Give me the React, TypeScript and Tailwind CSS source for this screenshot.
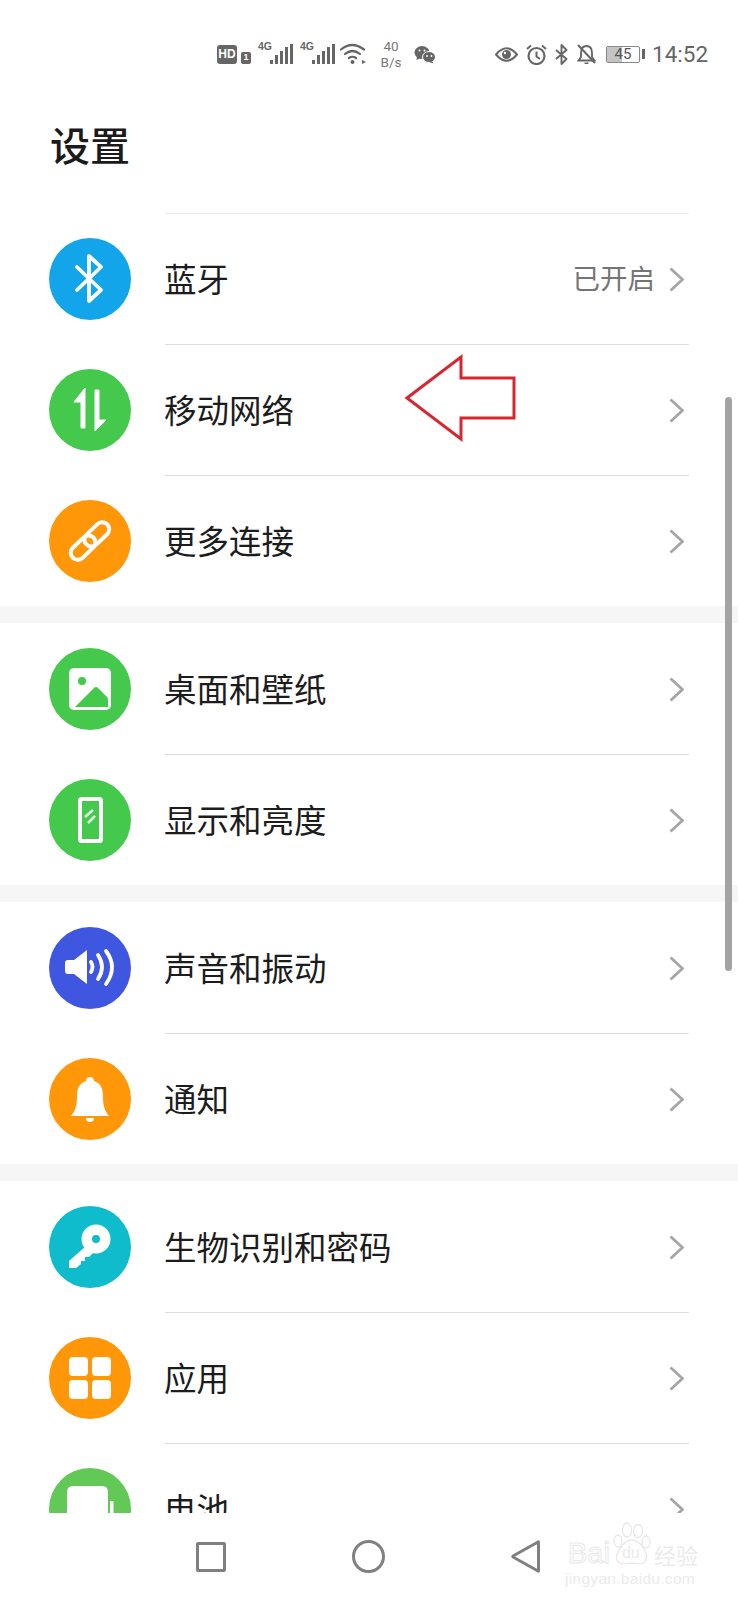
import type { ReactNode } from "react";

const FONT = "font-['Noto_Sans_CJK_SC','Noto_Sans',sans-serif]";

type Row = { label: string; color: string; icon: ReactNode; value?: string };

function BluetoothGlyph() {
  return (
    <path
      d="M28 29 L52 52 L40 63 V18 L52 29 L28 52"
      fill="none"
      stroke="#fff"
      strokeWidth="3.8"
      strokeLinecap="round"
      strokeLinejoin="round"
    />
  );
}

function Chevron() {
  return (
    <svg width="15" height="25" viewBox="0 0 15 25" className="shrink-0">
      <path d="M1.5 1.5 L13.5 12.5 L1.5 23.5" fill="none" stroke="#a6a6a6" strokeWidth="2.8" />
    </svg>
  );
}

const groups: Row[][] = [
  [
    { label: "蓝牙", color: "#12a5ea", value: "已开启", icon: <BluetoothGlyph /> },
    {
      label: "移动网络",
      color: "#45c94c",
      icon: (
        <g fill="#fff" stroke="#fff" strokeWidth="1" strokeLinejoin="round">
          <polygon points="36,19 36,59 32,59 32,33 25,33" />
          <polygon points="46,21 50,21 50,51 57,51 46,62" />
        </g>
      ),
    },
    {
      label: "更多连接",
      color: "#ff9708",
      icon: (
        <g transform="rotate(-44 41 41)" fill="none" stroke="#fff" strokeWidth="4">
          <rect x="17" y="34" width="29" height="14" rx="7" />
          <rect x="36" y="34" width="29" height="14" rx="7" />
        </g>
      ),
    },
  ],
  [
    {
      label: "桌面和壁纸",
      color: "#45c94c",
      icon: (
        <g>
          <rect x="20" y="20" width="42" height="42" rx="5" fill="#fff" />
          <circle cx="33" cy="33" r="4" fill="#45c94c" />
          <path d="M26 59 L45 40 Q47 38 49 40 L58 49 Q59 50 59 52 V59 Z" fill="#45c94c" />
        </g>
      ),
    },
    {
      label: "显示和亮度",
      color: "#45c94c",
      icon: (
        <g fill="none" stroke="#fff">
          <rect x="31" y="20" width="21" height="42" rx="1.5" strokeWidth="4" />
          <path d="M36 38 L44 31 M39 44 L46 37" strokeWidth="2.5" strokeOpacity="0.85" />
        </g>
      ),
    },
  ],
  [
    {
      label: "声音和振动",
      color: "#3f57e0",
      icon: (
        <g>
          <path d="M16 36 Q16 33 19 33 H25 L38 23 V57 L25 47 H19 Q16 47 16 44 Z" fill="#fff" />
          <path
            d="M42 35 Q45 40 42 45 M49 28 Q57 40 49 52 M57 24 Q69 40 57 57"
            fill="none"
            stroke="#fff"
            strokeWidth="3.8"
            strokeLinecap="round"
          />
        </g>
      ),
    },
    {
      label: "通知",
      color: "#ff9708",
      icon: (
        <g fill="#fff">
          <path d="M41 19 C44 19 45 21 45 23 C52 25 54 31 54 38 C54 46 55 52 60 58 H22 C27 52 28 46 28 38 C28 31 30 25 37 23 C37 21 38 19 41 19 Z" />
          <path d="M37 60 H45 Q45 64 41 64 Q37 64 37 60 Z" />
        </g>
      ),
    },
  ],
  [
    {
      label: "生物识别和密码",
      color: "#0fbccb",
      icon: (
        <g>
          <circle cx="47" cy="33" r="14.5" fill="#fff" />
          <circle cx="47" cy="33" r="4" fill="#0fbccb" />
          <path d="M37 40 L20 55 V62 H27 L32 58 V55 H36 V51 H40 L46 45 Z" fill="#fff" />
        </g>
      ),
    },
    {
      label: "应用",
      color: "#ff9708",
      icon: (
        <g fill="#fff">
          <rect x="20" y="20" width="19" height="19" rx="4" />
          <rect x="43" y="20" width="19" height="19" rx="4" />
          <rect x="20" y="43" width="19" height="19" rx="4" />
          <rect x="43" y="43" width="19" height="19" rx="4" />
        </g>
      ),
    },
    {
      label: "电池",
      color: "#62c956",
      icon: (
        <g fill="#fff">
          <path d="M18 82 V24 Q18 18 24 18 H53 Q59 18 59 24 V82 Z" />
          <rect x="61" y="33" width="3.5" height="49" />
        </g>
      ),
    },
  ],
];

function SettingRow({ row, line }: { row: Row; line: string }) {
  return (
    <div className="flex h-[131px] items-center pl-[49px] pr-[49px]">
      <svg width="82" height="82" viewBox="0 0 82 82" className="shrink-0">
        <circle cx="41" cy="41" r="41" fill={row.color} />
        {row.icon}
      </svg>
      <div className={`ml-[34px] flex h-full flex-1 items-center border-t pr-[5px] ${line}`}>
        <span className="mb-[2px] ml-[-1px] flex-1 text-[32.5px] leading-none text-[#1c1c1c]">
          {row.label}
        </span>
        {row.value ? (
          <span className="mb-[2px] mr-[14px] text-[27.5px] leading-none text-[#757575]">
            {row.value}
          </span>
        ) : null}
        <Chevron />
      </div>
    </div>
  );
}

function Signal() {
  return (
    <div className="relative h-[22px] w-[35px]">
      <span className="absolute left-0 top-[-2px] font-['Liberation_Sans'] text-[10.5px] font-bold leading-none text-[#666]">
        4G
      </span>
      <svg width="35" height="22" viewBox="0 0 35 22" className="absolute inset-0">
        <g fill="#666">
          <rect x="12" y="17" width="3" height="4" />
          <rect x="17" y="12" width="3" height="9" />
          <rect x="22" y="8" width="3" height="13" />
          <rect x="27" y="4" width="3" height="17" />
          <rect x="32" y="1" width="3" height="20" />
        </g>
      </svg>
    </div>
  );
}

function StatusBar() {
  return (
    <div className="flex h-[88px] items-center pl-[217px] pt-[20px] text-[#666]">
      <div className="flex h-[19px] w-[20px] items-center justify-center rounded-[3px] bg-[#666] font-['Liberation_Sans'] text-[12px] font-bold leading-none text-white">
        HD
      </div>
      <div className="ml-[4px] mt-[7px] flex h-[12px] w-[10px] items-center justify-center rounded-[2px] bg-[#666] font-['Liberation_Sans'] text-[9px] font-bold leading-none text-white">
        1
      </div>
      <div className="ml-[7px] flex gap-[7px]">
        <Signal />
        <Signal />
      </div>
      <svg width="27" height="22" viewBox="0 0 27 22" className="ml-[5px]">
        <path
          d="M1 6.5 Q12 -2.5 24 6.5 M5 11 Q12.5 5 20 11 M9 15 Q12.5 12.5 16 15"
          fill="none"
          stroke="#666"
          strokeWidth="2.2"
          strokeLinecap="round"
        />
        <circle cx="12.5" cy="19" r="2" fill="#666" />
        <path d="M22 17 L26 19 L22 21 Z" fill="#666" />
      </svg>
      <div className="ml-[12px] flex w-[24px] flex-col items-center font-['Roboto'] text-[13.5px] leading-[16px] text-[#777]">
        <span>40</span>
        <span>B/s</span>
      </div>
      <svg width="22" height="19" viewBox="0 0 22 19" className="ml-[11px]">
        <ellipse cx="8" cy="7.5" rx="7.5" ry="6.5" fill="#666" />
        <path d="M3 11 L2.5 15 L7 13 Z" fill="#666" />
        <ellipse cx="15" cy="12" rx="6.5" ry="5.5" fill="#666" stroke="#fff" strokeWidth="1" />
        <path d="M18 16 L19.5 18.5 L15 17 Z" fill="#666" />
        <circle cx="5.5" cy="5.5" r="1" fill="#fff" />
        <circle cx="10.5" cy="5.5" r="1" fill="#fff" />
        <circle cx="13" cy="11" r="0.9" fill="#fff" />
        <circle cx="17.5" cy="11" r="0.9" fill="#fff" />
      </svg>
      <svg width="23" height="15" viewBox="0 0 23 15" className="ml-[59px]">
        <path
          d="M1 7.5 Q11.5 -5 22 7.5 Q11.5 20 1 7.5 Z"
          fill="none"
          stroke="#666"
          strokeWidth="2"
        />
        <circle cx="11.5" cy="7.5" r="4.5" fill="#666" />
        <circle cx="10" cy="6" r="1.2" fill="#fff" />
      </svg>
      <svg width="21" height="21" viewBox="0 0 21 21" className="ml-[8px]">
        <circle cx="10.5" cy="12" r="8" fill="none" stroke="#666" strokeWidth="2.2" />
        <path
          d="M10.5 7.5 V12.5 L14 15 M1 5 L5 1.5 M20 5 L16 1.5"
          fill="none"
          stroke="#666"
          strokeWidth="2"
        />
      </svg>
      <svg width="13" height="21" viewBox="0 0 13 21" className="ml-[8px]">
        <path
          d="M1 6 L11.5 15 L6.5 20 V1 L11.5 6 L1 15"
          fill="none"
          stroke="#666"
          strokeWidth="1.9"
          strokeLinejoin="round"
        />
      </svg>
      <svg width="19" height="21" viewBox="0 0 19 21" className="ml-[9px]">
        <path
          d="M9.5 2 C13.5 2 15 5 15 9 V13 L17.5 16.5 H1.5 L4 13 V9 C4 5 5.5 2 9.5 2 Z"
          fill="none"
          stroke="#666"
          strokeWidth="1.9"
        />
        <path d="M1 1 L18 19" stroke="#666" strokeWidth="2" />
        <path d="M7.5 18.5 H11.5 V20 H7.5 Z" fill="#666" />
      </svg>
      <div className="relative ml-[10px] flex h-[17px] w-[34px] items-center justify-center overflow-hidden rounded-[2px] border border-[#888]">
        <div className="absolute inset-y-0 left-0 w-[15px] bg-[#c4c4c4]" />
        <span className="relative font-['Roboto'] text-[15px] leading-none text-[#555]">45</span>
      </div>
      <div className="ml-[2px] h-[10px] w-[3px] bg-[#666]" />
      <span className="ml-[7px] font-['Roboto'] text-[22.5px] leading-none text-[#666]">14:52</span>
    </div>
  );
}

function NavBar() {
  return (
    <div className="relative flex h-[87px] items-center pl-[196px]">
      <div className="h-[30px] w-[30px] rounded-[2px] border-[3px] border-[#808080]" />
      <div className="ml-[126px] h-[33px] w-[33px] rounded-full border-[3px] border-[#808080]" />
      <svg width="30" height="33" viewBox="0 0 30 33" className="ml-[126px]">
        <path
          d="M27.5 2 V31 Q27.5 31.5 27 31 L2 17 Q1.5 16.5 2 16 L27 2 Q27.5 1.5 27.5 2 Z"
          fill="none"
          stroke="#808080"
          strokeWidth="3"
          strokeLinejoin="round"
        />
      </svg>
      {/* watermark */}
      <div className="absolute left-[568px] top-[7px] h-[64px] w-[135px] text-[#ebebeb]">
        <div className="flex items-end font-['Liberation_Sans'] leading-none">
          <span className="mt-[20px] text-[29px] leading-[26px] text-white [-webkit-text-stroke:1px_#e8e8e8]">
            Bai
          </span>
          <div className="relative ml-[2px] h-[44px] w-[40px]">
            <svg width="40" height="44" viewBox="0 0 40 44" className="absolute inset-0">
              <g fill="none" stroke="#e8e8e8" strokeWidth="1.3">
                <ellipse cx="6" cy="19" rx="4" ry="6" />
                <ellipse cx="15" cy="8" rx="4.5" ry="7" />
                <ellipse cx="26" cy="9" rx="4.5" ry="6.5" />
                <ellipse cx="34" cy="20" rx="4" ry="6" />
                <path d="M20 18 C28 18 37 32 34 38 C31 44 25 41 20 41 C15 41 8 44 5 38 C2 32 12 18 20 18 Z" />
              </g>
            </svg>
            <span className="absolute bottom-[5px] left-[10px] text-[16px] leading-none">du</span>
          </div>
          <span className={`ml-[2px] text-[22px] leading-[24px] ${FONT}`}>经验</span>
        </div>
        <div className="ml-[-3px] mt-[5px] font-['Liberation_Sans'] text-[15.5px] leading-none tracking-[0.3px]">
          jingyan.baidu.com
        </div>
      </div>
    </div>
  );
}

export default function App() {
  return (
    <div className={`relative flex h-[1600px] w-[738px] flex-col overflow-hidden bg-white ${FONT}`}>
      <StatusBar />
      <div className="flex h-[125px] items-start pl-[50px] pt-[30px]">
        <h1 className="text-[40px] font-medium leading-[52px] text-[#1a1a1a]">设置</h1>
      </div>
      <div className="flex-1 overflow-hidden">
        {groups.map((group, i) => (
          <div key={i} className={i > 0 ? "border-t-[17px] border-[#f6f6f6]" : ""}>
            {group.map((row, j) => (
              <SettingRow
                key={row.label}
                row={row}
                line={
                  j > 0 ? "border-[#dddddd]" : i === 0 ? "border-[#ececec]" : "border-transparent"
                }
              />
            ))}
          </div>
        ))}
      </div>
      <NavBar />

      {/* scroll indicator */}
      <div className="absolute left-[725px] top-[397px] h-[574px] w-[7px] rounded-full bg-[#a3a3a3]" />

      {/* red annotation arrow */}
      <svg width="130" height="100" viewBox="0 0 130 100" className="absolute left-[395px] top-[349px]">
        <path
          d="M12 49 L66 8 V29 H119 V69 H66 V90 Z"
          fill="none"
          stroke="#d8262f"
          strokeWidth="3"
        />
      </svg>
    </div>
  );
}
